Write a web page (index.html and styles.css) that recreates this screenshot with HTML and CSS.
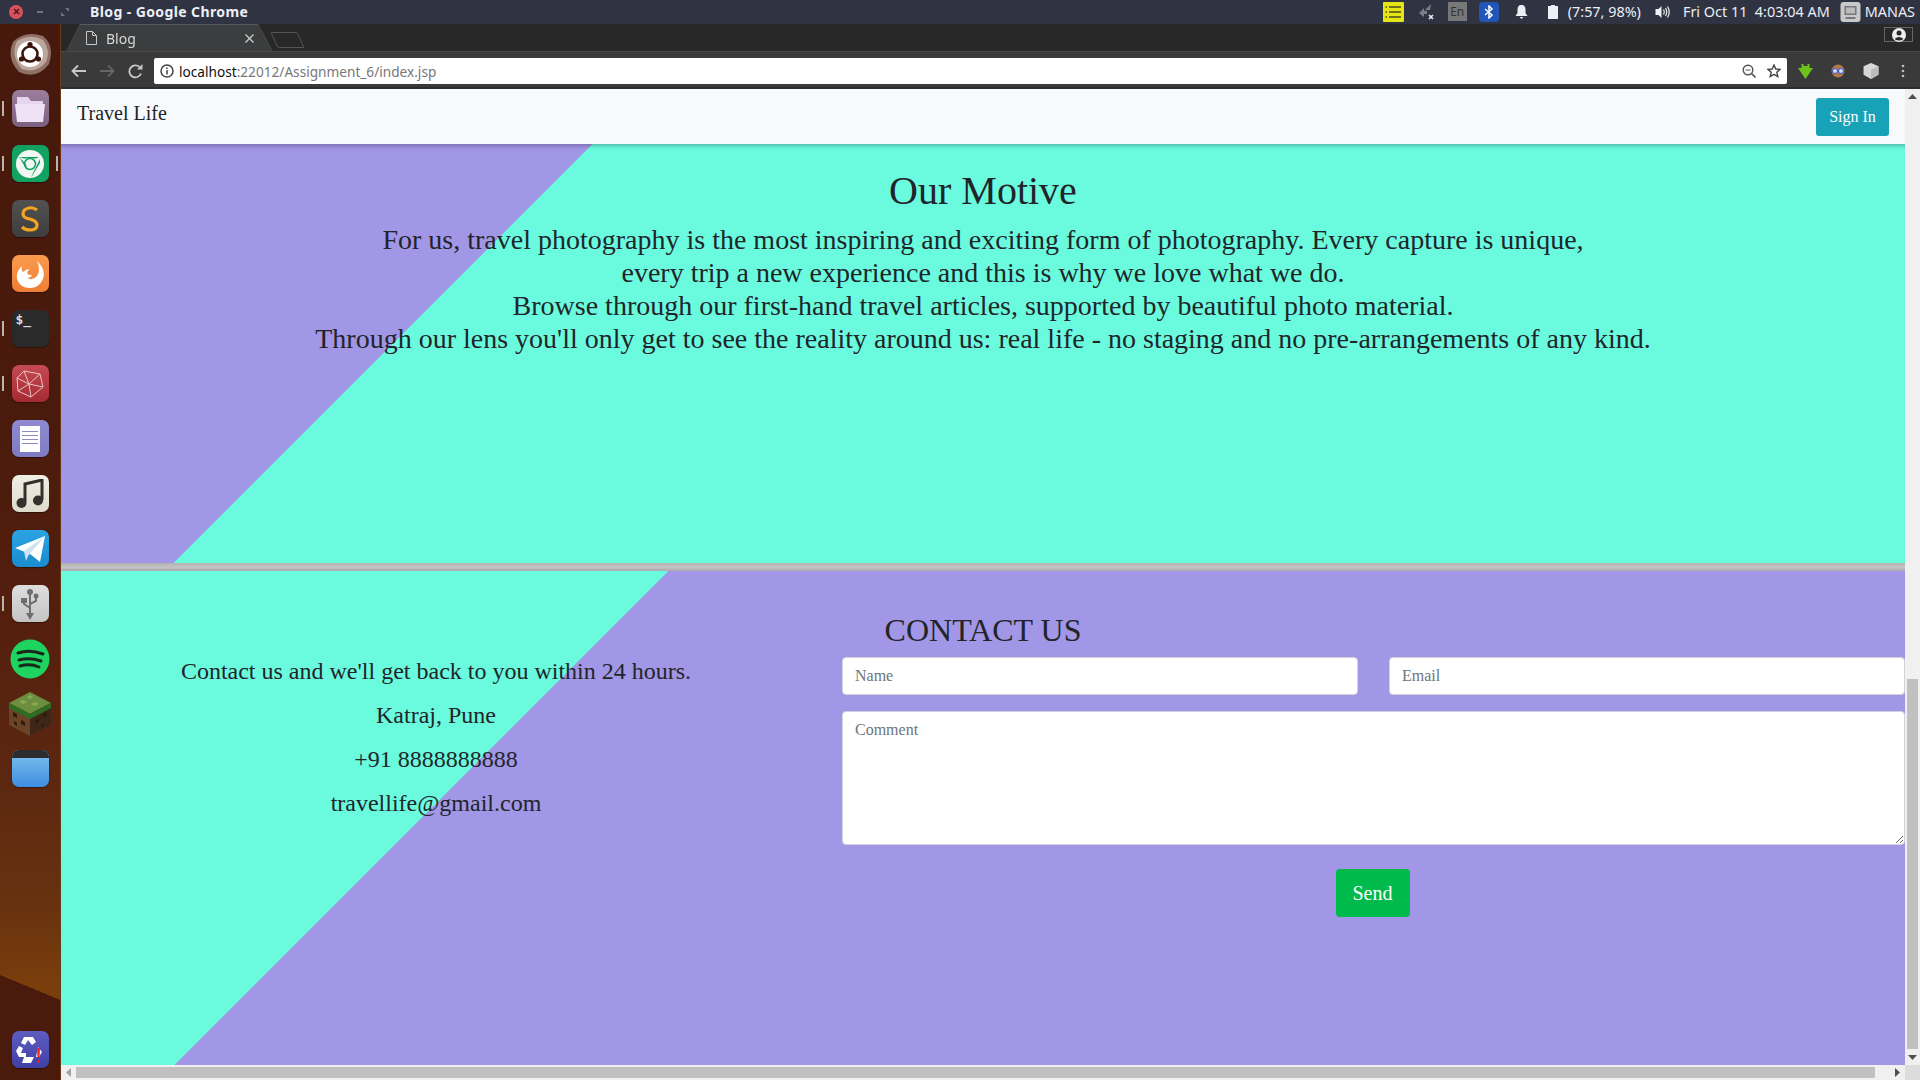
FILE: index.html
```html
<!DOCTYPE html>
<html lang="en">
<head>
<meta charset="utf-8">
<title>Blog</title>
<link rel="stylesheet" href="styles.css">
</head>
<body>
<header class="panel">
  <div class="win-btns">
    <span class="win-close"><svg width="11" height="11" viewBox="0 0 11 11"><path d="M3 3l5 5M8 3l-5 5" stroke="#4a1a1a" stroke-width="1.6"/></svg></span>
    <span class="win-min"></span>
    <svg class="win-max" width="8" height="8" viewBox="0 0 8 8"><path d="M4 0h4v4zM0 4l4 4H0z" fill="#6d7280"/></svg>
  </div>
  <div class="panel-title">Blog - Google Chrome</div>
  <div class="tray">
    <svg class="t1" width="21" height="20" viewBox="0 0 21 20"><rect width="21" height="20" rx="1" fill="#e6e617"/><path d="M6 5h12M6 10h12M6 15h12" stroke="#4a4a10" stroke-width="1.6"/><path d="M2.500 5h1.500M2.500 10h1.500M2.500 15h1.500" stroke="#4a4a10" stroke-width="1.6"/></svg>
    <svg class="t2" width="15" height="16" viewBox="0 0 15 16"><path d="M0 9l5-5v3h3v3H5v3zM12 0l-1 6H6l3-3z" fill="#7c8088"/><path d="M10 11l4 4M14 11l-4 4" stroke="#eee" stroke-width="1.6"/></svg>
    <span class="t-en">En</span>
    <span class="t-bt"><svg width="10" height="14" viewBox="0 0 10 14"><path d="M1 4l7 6-3 3V1l3 3-7 6" fill="none" stroke="#fff" stroke-width="1.5"/></svg></span>
    <svg class="t-bell" width="13" height="14" viewBox="0 0 12 14"><path d="M6 0c3 0 4 2 4 5v3l2 3H0l2-3V5c0-3 1-5 4-5zM4 12h4l-2 2z" fill="#eceff4"/></svg>
    <svg class="t-bat" width="10" height="14" viewBox="0 0 10 14"><path d="M3 0h4v1h3v13H0V1h3z" fill="#eceff4"/></svg>
    <span class="t-text t-time">(7:57, 98%)</span>
    <svg class="t-vol" width="15" height="14" viewBox="0 0 14 14"><path d="M0 4h3l3-3v12l-3-3H0z" fill="#eceff4"/><path d="M8 4.500q1.500 2.500 0 5M10 3q2.500 4 0 8M12 1.500q3.500 5.500 0 11" fill="none" stroke="#eceff4" stroke-width="1.200"/></svg>
    <span class="t-text t-date">Fri Oct 11&nbsp; 4:03:04 AM</span>
    <svg class="t-pc" width="21" height="20" viewBox="0 0 20 20"><rect width="20" height="20" rx="3" fill="#c9c9c9"/><rect x="4" y="4" width="12" height="9" fill="#777"/><rect x="5.500" y="5.500" width="9" height="6" fill="#bbb"/><path d="M5 15h10v2H5z" fill="#777"/></svg>
    <span class="t-text">MANAS</span>
  </div>
</header>
<div class="desktop">
  <nav class="launcher">
    <div class="launch-item"><svg width="44" height="44" viewBox="0 0 44 44"><path d="M5 10Q17-2 35 4q12 10 6 28-12 16-30 8Q-2 26 5 10z" fill="#8f7064"/><path d="M9 9q14-8 26-1 8 10 3 22-10 12-24 7Q2 24 9 9z" fill="#bba79e"/><circle cx="22" cy="22" r="13" fill="#fff"/><circle cx="22" cy="22" r="7.500" fill="none" stroke="#3a1408" stroke-width="2.600"/><circle cx="22" cy="12.500" r="2.600" fill="#3a1408"/><circle cx="13.500" cy="27" r="2.600" fill="#3a1408"/><circle cx="30.500" cy="27" r="2.600" fill="#3a1408"/></svg></div>
    <div class="launch-item pip"><span class="tile tile-files"><svg width="30" height="26" viewBox="0 0 30 26"><path d="M2 1h11l3 4h12v4H2z" fill="#e6d5ee"/><path d="M0 8h30l-2 18H2z" fill="#f0e2f6"/></svg></span></div>
    <div class="launch-item pip pip-both"><span class="tile tile-chrome"><svg width="30" height="30" viewBox="0 0 30 30"><circle cx="15" cy="15" r="14" fill="#f2f7f4"/><circle cx="15" cy="15" r="5.500" fill="none" stroke="#12a362" stroke-width="1.500"/><path d="M4 8h20l-3 1.500H9zM4 8l8 13-1-6zM25 10l-9 18 1-1 8-13z" fill="#12a362"/></svg></span></div>
    <div class="launch-item"><span class="tile tile-sublime"><svg width="20" height="28" viewBox="0 0 20 28"><path d="M17 5Q13 2 9 3 3 4 3 9q0 4 7 5 7 2 7 6 0 5-7 5-5 0-8-3" fill="none" stroke="#f5a321" stroke-width="3.200"/></svg></span></div>
    <div class="launch-item"><span class="tile tile-firefox"><svg width="30" height="30" viewBox="0 0 30 30"><path d="M22 2q9 8 6 18-4 9-13 9Q5 29 2 20 1 12 7 7q-1 4 1 6 3-3 7-3-3 2-3 4 1 2 5 2-1 3-5 3 6 3 10-2 4-6 0-15z" fill="#fff"/></svg></span></div>
    <div class="launch-item pip"><span class="tile tile-term"><span class="term-txt">$_</span></span></div>
    <div class="launch-item pip"><span class="tile tile-cube"><svg width="30" height="30" viewBox="0 0 30 30"><path d="M9 2l16 3 3 13-12 10L3 22 2 9zM9 2l5 13 14 3M14 15L3 22M14 15l2 13M2 9l12 6M25 5l-11 10" fill="none" stroke="#ecc4c4" stroke-width="1"/></svg></span></div>
    <div class="launch-item"><span class="tile tile-doc"><span class="doc-page"><i></i><i></i><i></i><i></i></span></span></div>
    <div class="launch-item"><span class="tile tile-music"><svg width="28" height="30" viewBox="0 0 28 30"><path d="M9 23V5l17-4v20" fill="none" stroke="#33312c" stroke-width="3"/><circle cx="5.500" cy="24" r="5" fill="#33312c"/><circle cx="22" cy="21.500" r="5" fill="#33312c"/></svg></span></div>
    <div class="launch-item"><span class="tile tile-tg"><svg width="30" height="26" viewBox="0 0 30 26"><path d="M0 12L30 0 25 26 15 18z" fill="#fff"/><path d="M9 15L30 0 13 20l-2 5z" fill="#cfe3f0"/></svg></span></div>
    <div class="launch-item pip"><span class="tile tile-usb"><svg width="20" height="32" viewBox="0 0 20 32"><path d="M10 4v24M10 20l-6-4v-3M10 16l6-3V9" fill="none" stroke="#6e6e6e" stroke-width="2"/><circle cx="10" cy="4" r="3" fill="#6e6e6e"/><rect x="1" y="10" width="6" height="5" fill="#6e6e6e"/><circle cx="16" cy="8" r="2.500" fill="#6e6e6e"/><path d="M6 25h8l-4 7z" fill="#6e6e6e"/></svg></span></div>
    <div class="launch-item"><svg width="40" height="40" viewBox="0 0 40 40"><circle cx="20" cy="20" r="19.500" fill="#1ed35f"/><path d="M8 14q12-4 25 1M9 21q11-3 22 1M10 27q10-3 19 1" fill="none" stroke="#18281c" stroke-width="3" stroke-linecap="round"/></svg></div>
    <div class="launch-item"><svg width="42" height="44" viewBox="0 0 42 44"><path d="M21 0l21 11-21 11L0 11z" fill="#6b8f3e"/><path d="M0 11l21 11v22L0 33z" fill="#6b4426"/><path d="M42 11L21 22v22l21-11z" fill="#3e2716"/><path d="M0 11l21 11v5L0 16zM42 11L21 22v5l21-11z" fill="#2f6d22"/><path d="M4 20l4 2v4l-4-2zM12 28l4 2v4l-4-2zM5 29l3 2v3l-3-2zM26 28l4-2v4l-4 2zM34 22l4-2v4l-4 2zM32 33l3-2v3l-3 2z" fill="#2e1a0e"/><path d="M14 8l4 2-4 2-4-2zM26 10l4 2-4 2-4-2zM21 3l3 2-3 2-3-2z" fill="#88aa55"/></svg></div>
    <div class="launch-item"><span class="tile tile-folder"></span></div>
    <div class="launch-spacer"></div>
    <div class="launch-item"><span class="tile tile-recycle"><svg width="30" height="28" viewBox="0 0 30 28"><path d="M9 1h9l3 5-4 3-4-5-3 5-4-2zM1 15l3-5 4 2-2 5h5v4H4zM9 21h10l-3 6H7zM23 11l4 5-3 5h-3z" fill="#fff"/><path d="M22 12h3l-.5 10h-2zM22.500 24h2v3h-2z" fill="#e8232a"/></svg></span></div>
  </nav>
  <div class="browser">
    <div class="tabbar">
      <div class="tab-wrap">
        <div class="tab">
          <svg width="11" height="14" viewBox="0 0 11 14"><path d="M.5.500h6l4 4v9H.5zM6.500.500v4h4" fill="none" stroke="#c8c8c8"/></svg>
          <span class="tab-label">Blog</span>
          <svg class="tab-x" width="9" height="9" viewBox="0 0 9 9"><path d="M.5.500l8 8M8.500.500l-8 8" stroke="#c8c8c8" stroke-width="1.400"/></svg>
        </div>
      </div>
      <span class="newtab"></span>
      <span class="profile"><svg width="14" height="14" viewBox="0 0 14 14"><circle cx="7" cy="7" r="7" fill="#eee"/><circle cx="7" cy="5" r="2.500" fill="#282828"/><path d="M2.500 11q4.500-4 9 0-4.500 3-9 0z" fill="#282828"/></svg></span>
    </div>
    <div class="toolbar">
      <svg class="tb-back" width="16" height="14" viewBox="0 0 16 14"><path d="M15 7H2M7 1.500L1.500 7 7 12.500" fill="none" stroke="#c8c8c8" stroke-width="1.800"/></svg>
      <svg class="tb-fwd" width="16" height="14" viewBox="0 0 16 14"><path d="M1 7h13M9 1.500L14.500 7 9 12.500" fill="none" stroke="#666" stroke-width="1.800"/></svg>
      <svg class="tb-reload" width="15" height="15" viewBox="0 0 15 15"><path d="M13 9.500A6 6 0 1 1 11.500 3" fill="none" stroke="#c8c8c8" stroke-width="1.800"/><path d="M9 5.500h5.500V0z" fill="#c8c8c8"/></svg>
      <div class="omnibox">
        <svg width="14" height="14" viewBox="0 0 14 14"><circle cx="7" cy="7" r="6" fill="none" stroke="#444" stroke-width="1.500"/><path d="M7 6v4.500M7 3.500v1.500" stroke="#444" stroke-width="1.500"/></svg>
        <span class="url"><b>localhost</b>:22012/Assignment_6/index.jsp</span>
        <svg class="om-zoom" width="14" height="14" viewBox="0 0 14 14"><circle cx="6" cy="6" r="4.800" fill="none" stroke="#555" stroke-width="1.400"/><path d="M9.500 9.500L13.500 13.500" stroke="#555" stroke-width="1.600"/><path d="M3.500 6h5" stroke="#555"/></svg>
        <svg width="14" height="14" viewBox="0 0 14 14"><path d="M7 1l1.800 4 4.200.4-3.200 2.800 1 4.300L7 10.300 3.200 12.500l1-4.300L1 5.400 5.200 5z" fill="none" stroke="#444" stroke-width="1.400"/></svg>
      </div>
      <div class="ext">
        <svg width="15" height="15" viewBox="0 0 15 15"><path d="M3.500 0h8v3h-2V0h-4v3h-2zM0 4h3.500V2h8v2H15L7.500 15z" fill="#6bc41a"/></svg>
        <svg width="14" height="14" viewBox="0 0 14 14"><circle cx="7" cy="7" r="6.500" fill="#b07a4a"/><circle cx="4" cy="7" r="2.500" fill="#cfe0ff" stroke="#3355cc"/><circle cx="10" cy="7" r="2.500" fill="#cfe0ff" stroke="#3355cc"/></svg>
        <svg width="16" height="16" viewBox="0 0 15 15"><path d="M7.500 0l7 3v8l-7 4-7-4V3z" fill="#d8d8d8"/><path d="M7.500 6l7-3v8l-7 4z" fill="#bdbdbd"/></svg>
        <svg class="ext-menu" width="4" height="14" viewBox="0 0 4 14"><circle cx="2" cy="2" r="1.300" fill="#c0c0c0"/><circle cx="2" cy="7" r="1.300" fill="#c0c0c0"/><circle cx="2" cy="12" r="1.300" fill="#c0c0c0"/></svg>
      </div>
    </div>
    <div class="viewport">
      <main class="page">
        <div class="navbar">
          <a class="brand">Travel Life</a>
          <button class="signin">Sign In</button>
        </div>
        <section class="motive">
          <h2 class="motive-title">Our Motive</h2>
          <p class="motive-text">For us, travel photography is the most inspiring and exciting form of photography. Every capture is unique,<br>every trip a new experience and this is why we love what we do.<br>Browse through our first-hand travel articles, supported by beautiful photo material.<br>Through our lens you'll only get to see the reality around us: real life - no staging and no pre-arrangements of any kind.</p>
        </section>
        <hr class="divider">
        <section class="contact">
          <h3 class="contact-title">CONTACT US</h3>
          <div class="contact-row">
            <div class="contact-info">
              <p>Contact us and we'll get back to you within 24 hours.</p>
              <p>Katraj, Pune</p>
              <p>+91 8888888888</p>
              <p>travellife@gmail.com</p>
            </div>
            <form class="contact-form">
              <input class="field" placeholder="Name">
              <input class="field" placeholder="Email">
              <textarea class="field area" placeholder="Comment"></textarea>
              <button class="send" type="button">Send</button>
            </form>
          </div>
        </section>
      </main>
      <div class="vscroll">
        <svg class="arrow" width="9" height="5" viewBox="0 0 9 5"><path d="M4.500 0L9 5H0z" fill="#505050"/></svg>
        <span class="vtrack"><span class="vthumb"></span></span>
        <svg class="arrow" width="9" height="5" viewBox="0 0 9 5"><path d="M4.500 5L9 0H0z" fill="#505050"/></svg>
      </div>
      <div class="hscroll">
        <svg class="arrow" width="5" height="9" viewBox="0 0 5 9"><path d="M0 4.500L5 0v9z" fill="#a3a3a3"/></svg>
        <span class="hthumb"></span>
        <svg class="arrow" width="5" height="9" viewBox="0 0 5 9"><path d="M5 4.500L0 0v9z" fill="#505050"/></svg>
      </div>
      <div class="corner"></div>
    </div>
  </div>
</div>
</body>
</html>
```
FILE: styles.css
```css
* { box-sizing: border-box; }
html, body { margin: 0; height: 100%; overflow: hidden; }
body { display: flex; flex-direction: column; width: 1920px; height: 1080px; background: #282828; font-family: "Liberation Serif", serif; }

/* system panel */
.panel { height: 24px; flex: none; background: #2f3342; display: flex; align-items: center; padding-bottom: 1px; font-family: "Noto Sans", sans-serif; color: #eceff4; }
.win-btns { width: 90px; display: flex; align-items: center; padding-left: 9px; }
.win-close { width: 14px; height: 14px; border-radius: 50%; background: #d9515d; display: flex; align-items: center; justify-content: center; }
.win-min { width: 6px; height: 2px; background: #6d7280; margin-left: 14px; }
.win-max { margin-left: 18px; }
.panel-title { font-size: 14px; font-weight: 700; letter-spacing: .4px; }
.tray { margin-left: auto; display: flex; align-items: center; padding-right: 5px; }
.t1 { margin-right: 15px; }
.t2 { margin-right: 14px; }
.t-en { width: 19px; height: 19px; background: #777; color: #333; font-size: 12px; display: flex; align-items: center; justify-content: center; margin-right: 12px; }
.t-bt { width: 20px; height: 20px; border-radius: 4px; background: #1f56b8; display: flex; align-items: center; justify-content: center; margin-right: 16px; }
.t-bell { margin-right: 20px; }
.t-bat { margin-right: 10px; }
.t-text { font-size: 14.4px; white-space: nowrap; }
.t-time { margin-right: 14px; }
.t-vol { margin-right: 13px; }
.t-date { margin-right: 10px; }
.t-pc { margin-right: 4px; }

.desktop { flex: 1; display: flex; min-height: 0; }

/* launcher */
.launcher { width: 61px; flex: none; display: flex; flex-direction: column; align-items: center; padding: 2px 0 3px; background: linear-gradient(202.6deg, transparent 901px, #4a1a0c 901px), linear-gradient(180deg, #47190c 0, #4a1b0c 400px, #551f0e 600px, #5c2810 760px, #683210 880px, #7a3e0c 960px, #7a3e0c 100%); border-right: 1px solid #6a3a18; }
.launch-item { position: relative; height: 55px; width: 100%; flex: none; display: flex; align-items: center; justify-content: center; }
.launch-spacer { flex: 1; }
.pip::before { content: ""; position: absolute; left: 2px; top: 20px; width: 2px; height: 15px; background: #bdb3ad; }
.pip-both::after { content: ""; position: absolute; right: 2px; top: 20px; width: 2px; height: 15px; background: #bdb3ad; }
.tile { width: 37px; height: 37px; border-radius: 7px; display: flex; align-items: center; justify-content: center; box-shadow: 0 1px 1px rgba(0,0,0,.4); overflow: hidden; position: relative; }
.tile-files { background: linear-gradient(#9b7f9d, #7c5f7e); }
.tile-chrome { background: #12a362; }
.tile-sublime { background: linear-gradient(#525252, #3e3e3e); }
.tile-firefox { background: linear-gradient(#f99b4e, #ef7e34); }
.tile-term { background: #2a2a2a; align-items: flex-start; justify-content: flex-start; }
.term-txt { font-family: "DejaVu Sans Mono", monospace; font-size: 13px; font-weight: 700; color: #ddd; padding: 2px 0 0 4px; }
.tile-cube { background: linear-gradient(#c44a54, #a52a34); }
.tile-doc { background: linear-gradient(#8f8bd2, #7e7bc4); }
.doc-page { width: 20px; height: 26px; background: #fff; display: flex; flex-direction: column; gap: 3px; padding: 5px 2px 0; }
.doc-page i { display: block; height: 1px; background: #8d8ac6; }
.tile-music { background: linear-gradient(#f0efe4, #dcdbcb); }
.tile-tg { background: linear-gradient(#2aa4e4, #1a8bd0); }
.tile-usb { background: linear-gradient(#dedede, #c4c4c4); }
.tile-folder { background: linear-gradient(#7fc3ef, #3f8ee0); }
.tile-folder::before { content: ""; position: absolute; left: 0; right: 0; top: 0; height: 8px; background: #2c2c30; }
.tile-recycle { background: linear-gradient(#5e5ec0, #3f3fa8); }

/* chrome */
.browser { flex: 1; min-width: 0; display: flex; flex-direction: column; }
.tabbar { height: 28px; flex: none; display: flex; align-items: flex-end; background: #282828; border-bottom: 1px solid #4a4a4a; position: relative; }
.tab-wrap { margin-left: 6px; filter: drop-shadow(0 -1px 0 #5a5a5a); }
.tab { width: 205px; height: 26px; background: #3b3d3e; clip-path: polygon(13px 0, 191px 0, 205px 100%, 0 100%); display: flex; align-items: center; gap: 9px; padding: 0 18px 0 19px; color: #d8d8d8; font-family: "Noto Sans", sans-serif; font-size: 14px; }
.tab-label { flex: 1; }
.newtab { width: 27px; height: 16px; margin: 0 0 3px 2px; border: 1px solid #555; transform: skewX(25deg); border-radius: 2px; }
.profile { position: absolute; right: 7px; top: 3px; width: 29px; height: 15px; border: 1px solid #666; display: flex; align-items: center; justify-content: center; }
.toolbar { height: 37px; flex: none; background: #3a3a3a; display: flex; align-items: center; padding-top: 3px; border-bottom: 2px solid #2d2d2d; }
.tb-back { margin-left: 10px; }
.tb-fwd { margin-left: 12px; }
.tb-reload { margin-left: 13px; }
.omnibox { flex: none; width: 1633px; height: 26px; margin-left: 11px; background: #fff; border-radius: 2px; display: flex; align-items: center; padding: 0 6px; font-family: "Noto Sans", sans-serif; font-size: 13.65px; color: #777; }
.url { margin-left: 5px; flex: 1; }
.url b { font-weight: 400; color: #111; }
.om-zoom { margin-right: 11px; }
.ext { flex: 1; min-width: 0; display: flex; align-items: center; gap: 18px; padding: 0 15px 0 11px; }
.ext-menu { margin-left: 4px; }

/* viewport */
.viewport { flex: 1; min-height: 0; display: grid; grid-template-columns: 1fr 15px; grid-template-rows: 1fr 15px; }
.page { min-width: 0; min-height: 0; overflow: hidden; background: #f8f9fa; color: #212529; }
.navbar { height: 55px; background: #f8f9fa; display: flex; justify-content: space-between; padding: 7px 16px; }
.brand { font-size: 20px; line-height: 23px; padding-top: 6px; }
.signin { width: 73px; height: 38px; margin: 2px 0 0; border: 0; border-radius: 3px; background: #17a2b8; color: #fff; font: 16px "Liberation Serif", serif; }
.motive { height: 419px; padding-top: 23px; text-align: center; background: linear-gradient(135deg, #a296e6 375.5px, #6afbde 375.5px); box-shadow: inset 0 5px 4px -3px rgba(0,0,0,.25); }
.motive-title { margin: 0; font-size: 40px; font-weight: 400; line-height: 48px; }
.motive-text { margin: 8px 0 0; font-size: 28px; line-height: 33px; }
.divider { height: 8px; margin: 0; border: 0; background: linear-gradient(#b0b0b0, #c4c4c4 50%, #aaa); }
.contact { height: 494px; padding-top: 40px; background: linear-gradient(135deg, #6afbde 429.7px, #a296e6 429.7px); }
.contact-title { margin: 0; text-align: center; font-size: 32px; font-weight: 400; line-height: 38px; }
.contact-row { display: flex; gap: 31px; margin-top: 8px; }
.contact-info { width: 750px; flex: none; text-align: center; font-size: 24px; line-height: 28px; }
.contact-info p { margin: 0 0 16px; }
.contact-form { flex: 1; min-width: 0; display: grid; grid-template-columns: 1fr 1fr; gap: 16px 31px; }
.field { height: 38px; width: 100%; border: 1px solid #ced4da; border-radius: 4px; background: #fff; padding: 6px 12px; font: 16px/24px "Liberation Serif", serif; color: #495057; }
.field::placeholder { color: #6c757d; opacity: 1; }
.area { grid-column: 1 / -1; height: 134px; }
.send { grid-column: 1 / -1; justify-self: center; width: 74px; height: 48px; margin: 8px 2px 0 0; border: 0; border-radius: 4px; background: #00ba4c; color: #fff; font: 20px "Liberation Serif", serif; }

/* scrollbars */
.vscroll { background: #f0f0f0; display: flex; flex-direction: column; align-items: center; padding: 5px 0; justify-content: space-between; }
.vtrack { flex: 1; width: 100%; display: flex; flex-direction: column; justify-content: flex-end; padding: 0 2px 6px; margin-top: 5px; }
.vthumb { height: 370px; background: #c0c0c0; }
.hscroll { background: #f0f0f0; display: flex; align-items: center; padding: 0 5px; }
.hthumb { width: 1799px; height: 11px; margin-left: 5px; background: #c0c0c0; margin-right: auto; }
.corner { background: #dcdcdc; }
```
